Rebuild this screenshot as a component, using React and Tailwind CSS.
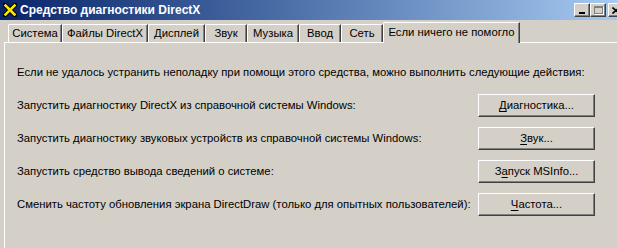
import React from 'react';

const tabs = [
    { label: 'Система', w: 'w-[54px]' },
    { label: 'Файлы DirectX', w: 'w-[86px]' },
    { label: 'Дисплей', w: 'w-[57px]' },
    { label: 'Звук', w: 'w-[42px]' },
    { label: 'Музыка', w: 'w-[52px]' },
    { label: 'Ввод', w: 'w-[42px]' },
    { label: 'Сеть', w: 'w-[42px]' },
];

const rows = [
    { text: 'Запустить диагностику DirectX из справочной системы Windows:', pre: '', key: 'Д', post: 'иагностика...' },
    { text: 'Запустить диагностику звуковых устройств из справочной системы Windows:', pre: '', key: 'З', post: 'вук...' },
    { text: 'Запустить средство вывода сведений о системе:', pre: 'З', key: 'а', post: 'пуск MSInfo...' },
    { text: 'Сменить частоту обновления экрана DirectDraw (только для опытных пользователей):', pre: '', key: 'Ч', post: 'астота...' },
];

function WinButton({ children, className = '' }) {
    return (
        <div
            className={`flex items-center justify-center border border-t-white border-l-white border-r-[#404040] border-b-[#404040] bg-[#d4d0c8] shadow-[inset_-1px_-1px_0_#808080] ${className}`}
        >
            {children}
        </div>
    );
}

export default function App() {
    return (
        <div className="w-[617px] h-[248px] overflow-hidden bg-[#d4d0c8] text-black text-[11.3px] font-['Liberation_Sans',Arial,sans-serif]">
            {/* Title bar */}
            <div className="h-[20px] flex items-center bg-gradient-to-r from-[#0a246a] to-[#a6caf0] pl-[3px] overflow-hidden">
                <svg width="14" height="14" viewBox="0 0 14 14" className="shrink-0">
                    <path d="M2 2 L12 12 M12 2 L2 12" stroke="#000" strokeWidth="4.5" strokeLinecap="square" />
                    <path d="M2.5 2.5 L11.5 11.5 M11.5 2.5 L2.5 11.5" stroke="#ffe600" strokeWidth="2.6" strokeLinecap="square" />
                </svg>
                <span className="ml-[3px] text-white font-bold text-[12px] leading-none">
                    Средство диагностики DirectX
                </span>
                <div className="ml-auto mr-[-7px] flex items-center">
                    <WinButton className="w-[16px] h-[14px]">
                        <div className="w-[6px] h-[2px] bg-black mt-[6px]" />
                    </WinButton>
                    <WinButton className="w-[16px] h-[14px]">
                        <div className="w-[9px] h-[8px] border border-[#808080] border-t-2 shadow-[1px_1px_0_#fff]" />
                    </WinButton>
                    <WinButton className="ml-[2px] w-[16px] h-[14px]">
                        <svg width="8" height="7" viewBox="0 0 8 7">
                            <path d="M0.5 0.5 L7.5 6.5 M7.5 0.5 L0.5 6.5" stroke="#000" strokeWidth="1.6" />
                        </svg>
                    </WinButton>
                </div>
            </div>

            {/* Tabs */}
            <div className="h-[22px] flex items-end pl-[8px]">
                {tabs.map((t) => (
                    <div
                        key={t.label}
                        className={`${t.w} h-[18px] flex items-center justify-center border-t border-l border-t-white border-l-white border-r border-r-[#404040] shadow-[inset_-1px_0_0_#808080] rounded-tl-[2px] leading-none`}
                    >
                        {t.label}
                    </div>
                ))}
                <div className="relative z-10 w-[137px] h-[21px] mb-[-1px] flex items-center justify-center bg-[#d4d0c8] border-t border-l border-t-white border-l-white border-r border-r-[#404040] shadow-[inset_-1px_0_0_#808080] rounded-tl-[2px] leading-none pb-[1px]">
                    Если ничего не помогло
                </div>
            </div>

            {/* Panel */}
            <div className="ml-[4px] h-[206px] border-t border-l border-white pt-[22px] pl-[12px] pr-[22px]">
                <p className="h-[14px] leading-[14px] whitespace-nowrap">
                    Если не удалось устранить неполадку при помощи этого средства, можно выполнить следующие действия:
                </p>
                <div className="mt-[15px] flex flex-col gap-[10px]">
                    {rows.map((r) => (
                        <div key={r.text} className="h-[23px] flex items-center justify-between">
                            <span className="whitespace-nowrap">{r.text}</span>
                            <WinButton className="w-[117px] h-[23px] shrink-0">
                                <span>
                                    {r.pre}
                                    <span className="underline underline-offset-2">{r.key}</span>
                                    {r.post}
                                </span>
                            </WinButton>
                        </div>
                    ))}
                </div>
            </div>
        </div>
    );
}
